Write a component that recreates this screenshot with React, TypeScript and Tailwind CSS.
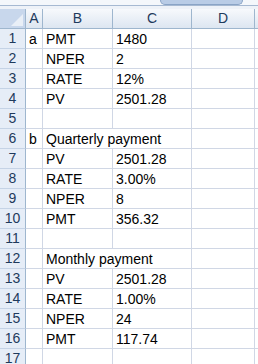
const cols = ["A", "B", "C", "D", ""];

type Row = { a?: string; b?: string; c?: string; span?: boolean };

const rows: Row[] = [
  { a: "a", b: "PMT", c: "1480" },
  { b: "NPER", c: "2" },
  { b: "RATE", c: "12%" },
  { b: "PV", c: "2501.28" },
  {},
  { a: "b", b: "Quarterly payment", span: true },
  { b: "PV", c: "2501.28" },
  { b: "RATE", c: "3.00%" },
  { b: "NPER", c: "8" },
  { b: "PMT", c: "356.32" },
  {},
  { b: "Monthly payment", span: true },
  { b: "PV", c: "2501.28" },
  { b: "RATE", c: "1.00%" },
  { b: "NPER", c: "24" },
  { b: "PMT", c: "117.74" },
  {},
];

const cell = "h-5 border-r border-b border-[#d0d7e5] px-[3px] pt-[1px] leading-[18px] whitespace-nowrap overflow-hidden";

export default function App() {
  return (
    <div className="w-[258px] h-[364px] overflow-hidden bg-white font-['Liberation_Sans',Arial,sans-serif] text-[14px] text-black">
      {/* top strip with scroll tab */}
      <div className="h-[5px] bg-[#f4f7fb] flex">
        <div className="ml-[160px] w-[83px] h-[5px] bg-[#b9cce6] border-x border-b border-[#8aa4c6] rounded-b-[5px]" />
      </div>
      <div className="h-[4px] border-t border-[#a6b9d2] bg-[#eef2f8]" />

      <div className="grid grid-cols-[26px_17px_70px_79px_63px_1fr]">
        {/* corner */}
        <div className="h-5 bg-[#c8d7ec] border-r border-b border-[#9eb6ce] flex items-end justify-end p-[2px]">
          <div className="w-0 h-0 border-l-[12px] border-l-transparent border-b-[12px] border-b-[#e9eff7]" />
        </div>
        {cols.map((c, i) => (
          <div
            key={i}
            className="h-5 bg-gradient-to-b from-[#f7f9fc] to-[#dde6f1] border-r border-b border-[#9eb6ce] text-center leading-[19px] text-[#1e3a5c]"
          >
            {c}
          </div>
        ))}

        {rows.map((r, i) => (
          <div key={i} className="contents">
            <div className="h-5 bg-[#e6edf7] border-r border-[#9eb6ce] border-b border-b-[#c5d3e6] text-center leading-[19px] text-[#1e3a5c]">
              {i + 1}
            </div>
            <div className={cell}>{r.a}</div>
            {r.span ? (
              <div className={`${cell} col-span-2`}>{r.b}</div>
            ) : (
              <>
                <div className={cell}>{r.b}</div>
                <div className={cell}>{r.c}</div>
              </>
            )}
            <div className={cell} />
            <div className={cell} />
          </div>
        ))}
      </div>
    </div>
  );
}
